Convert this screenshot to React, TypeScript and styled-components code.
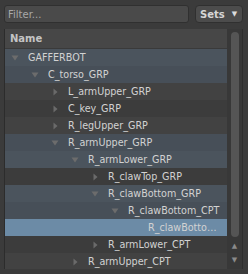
import styled, { createGlobalStyle } from "styled-components";

const GlobalStyle = createGlobalStyle`
  html, body {
    margin: 0;
    padding: 0;
    background: #3b3b3b;
  }
  body {
    font-family: "DejaVu Sans", sans-serif;
  }
`;

const Root = styled.div`
  width: 248px;
  height: 274px;
  box-sizing: border-box;
  padding: 5px 5px 5px 4px;
  display: flex;
  flex-direction: column;
  gap: 6px;
  overflow: hidden;
`;

const Toolbar = styled.div`
  display: flex;
  gap: 6px;
  height: 18px;
`;

const FilterInput = styled.input`
  flex: 1;
  min-width: 0;
  box-sizing: border-box;
  height: 18px;
  margin: 0;
  padding: 0 3px;
  border: 1px solid #303030;
  border-radius: 3px;
  background: #4a4a4a;
  color: #d4d4d4;
  font-family: "DejaVu Sans", sans-serif;
  font-size: 10px;
  outline: none;

  &::placeholder {
    color: #a8a8a8;
  }
`;

const SetsButton = styled.button`
  width: 48px;
  height: 18px;
  box-sizing: border-box;
  margin: 0;
  padding: 0 0 0 4px;
  display: flex;
  align-items: center;
  gap: 7px;
  border: 1px solid #303030;
  border-radius: 4px;
  background: #4c4c4c;
  color: #d6d6d6;
  font-family: "DejaVu Sans", sans-serif;
  font-size: 10px;
  font-weight: bold;
`;

const Caret = styled.span`
  font-size: 7px;
  color: #dcdcdc;
`;

const Panel = styled.div`
  flex: 1;
  display: flex;
  min-height: 0;
`;

const Tree = styled.div`
  flex: 1;
  min-width: 0;
  border-left: 1px solid #2c2c2c;
  display: flex;
  flex-direction: column;
  overflow: hidden;
`;

const Header = styled.div`
  height: 20px;
  flex-shrink: 0;
  display: flex;
  align-items: center;
  padding-left: 5px;
  background: #474747;
  color: #c4c4c4;
  font-size: 10px;
  font-weight: bold;
  border-bottom: 1px solid #3a3a3a;
  box-sizing: border-box;
`;

type Tone = "light" | "dark" | "blueLight" | "blueDark" | "selected";

const tones: Record<Tone, string> = {
  light: "#424242",
  dark: "#3c3c3c",
  blueLight: "#4b545d",
  blueDark: "#474f58",
  selected: "#6c8ba6",
};

const Row = styled.div<{ $tone: Tone }>`
  height: 17px;
  flex-shrink: 0;
  display: flex;
  align-items: center;
  color: #d2d2d2;
  font-size: 9.6px;
  white-space: nowrap;
  background: ${(p) => tones[p.$tone]};
`;

const Toggle = styled.span<{ $level: number }>`
  width: 10px;
  flex-shrink: 0;
  margin-left: ${(p) => 5 + p.$level * 20}px;
  margin-right: 8px;
  display: flex;
  justify-content: center;
  color: #6c6c6c;
`;

const Label = styled.span`
  line-height: 17px;
  overflow: hidden;
  text-overflow: ellipsis;
  padding-right: 3px;
`;

const Scrollbar = styled.div`
  width: 16px;
  flex-shrink: 0;
  background: #383838;
  border-right: 1px solid #2e2e2e;
  box-sizing: border-box;
  display: flex;
  flex-direction: column;
  align-items: center;
  padding: 3px 0 2px;
`;

const Handle = styled.div`
  width: 8px;
  height: 205px;
  border-radius: 4px;
  background: #555555;
`;

const Spacer = styled.div`
  flex: 1;
`;

const Arrow = styled.span`
  font-size: 7px;
  line-height: 14px;
  color: #8a8a8a;
`;

type Item = {
  name: string;
  level: number;
  state: "open" | "closed" | "leaf";
  tone: Tone;
};

const items: Item[] = [
  { name: "GAFFERBOT", level: 0, state: "open", tone: "blueLight" },
  { name: "C_torso_GRP", level: 1, state: "open", tone: "blueDark" },
  { name: "L_armUpper_GRP", level: 2, state: "closed", tone: "light" },
  { name: "C_key_GRP", level: 2, state: "closed", tone: "dark" },
  { name: "R_legUpper_GRP", level: 2, state: "closed", tone: "light" },
  { name: "R_armUpper_GRP", level: 2, state: "open", tone: "blueDark" },
  { name: "R_armLower_GRP", level: 3, state: "open", tone: "blueLight" },
  { name: "R_clawTop_GRP", level: 4, state: "closed", tone: "dark" },
  { name: "R_clawBottom_GRP", level: 4, state: "open", tone: "blueLight" },
  { name: "R_clawBottom_CPT", level: 5, state: "open", tone: "blueDark" },
  { name: "R_clawBottom_CPT_geo", level: 6, state: "leaf", tone: "selected" },
  { name: "R_armLower_CPT", level: 4, state: "closed", tone: "dark" },
  { name: "R_armUpper_CPT", level: 3, state: "closed", tone: "light" },
];

const Expanded = () => (
  <svg width="8" height="6" viewBox="0 0 8 6">
    <path d="M0.5 0.5 L7.5 0.5 L4 5.5 Z" fill="currentColor" />
  </svg>
);

const Collapsed = () => (
  <svg width="5" height="8" viewBox="0 0 5 8">
    <path d="M0.5 0.5 L4.5 4 L0.5 7.5 Z" fill="#6a6a6a" />
  </svg>
);

const App = () => {
  return (
    <>
      <GlobalStyle />
      <Root>
        <Toolbar>
          <FilterInput placeholder="Filter..." />
          <SetsButton>
            Sets <Caret>▼</Caret>
          </SetsButton>
        </Toolbar>
        <Panel>
          <Tree>
            <Header>Name</Header>
            {items.map((item) => (
              <Row key={item.name + item.level} $tone={item.tone}>
                <Toggle $level={item.level}>
                  {item.state === "open" && <Expanded />}
                  {item.state === "closed" && <Collapsed />}
                </Toggle>
                <Label>{item.name}</Label>
              </Row>
            ))}
          </Tree>
          <Scrollbar>
            <Handle />
            <Spacer />
            <Arrow>▲</Arrow>
            <Arrow>▼</Arrow>
          </Scrollbar>
        </Panel>
      </Root>
    </>
  );
};

export default App;
